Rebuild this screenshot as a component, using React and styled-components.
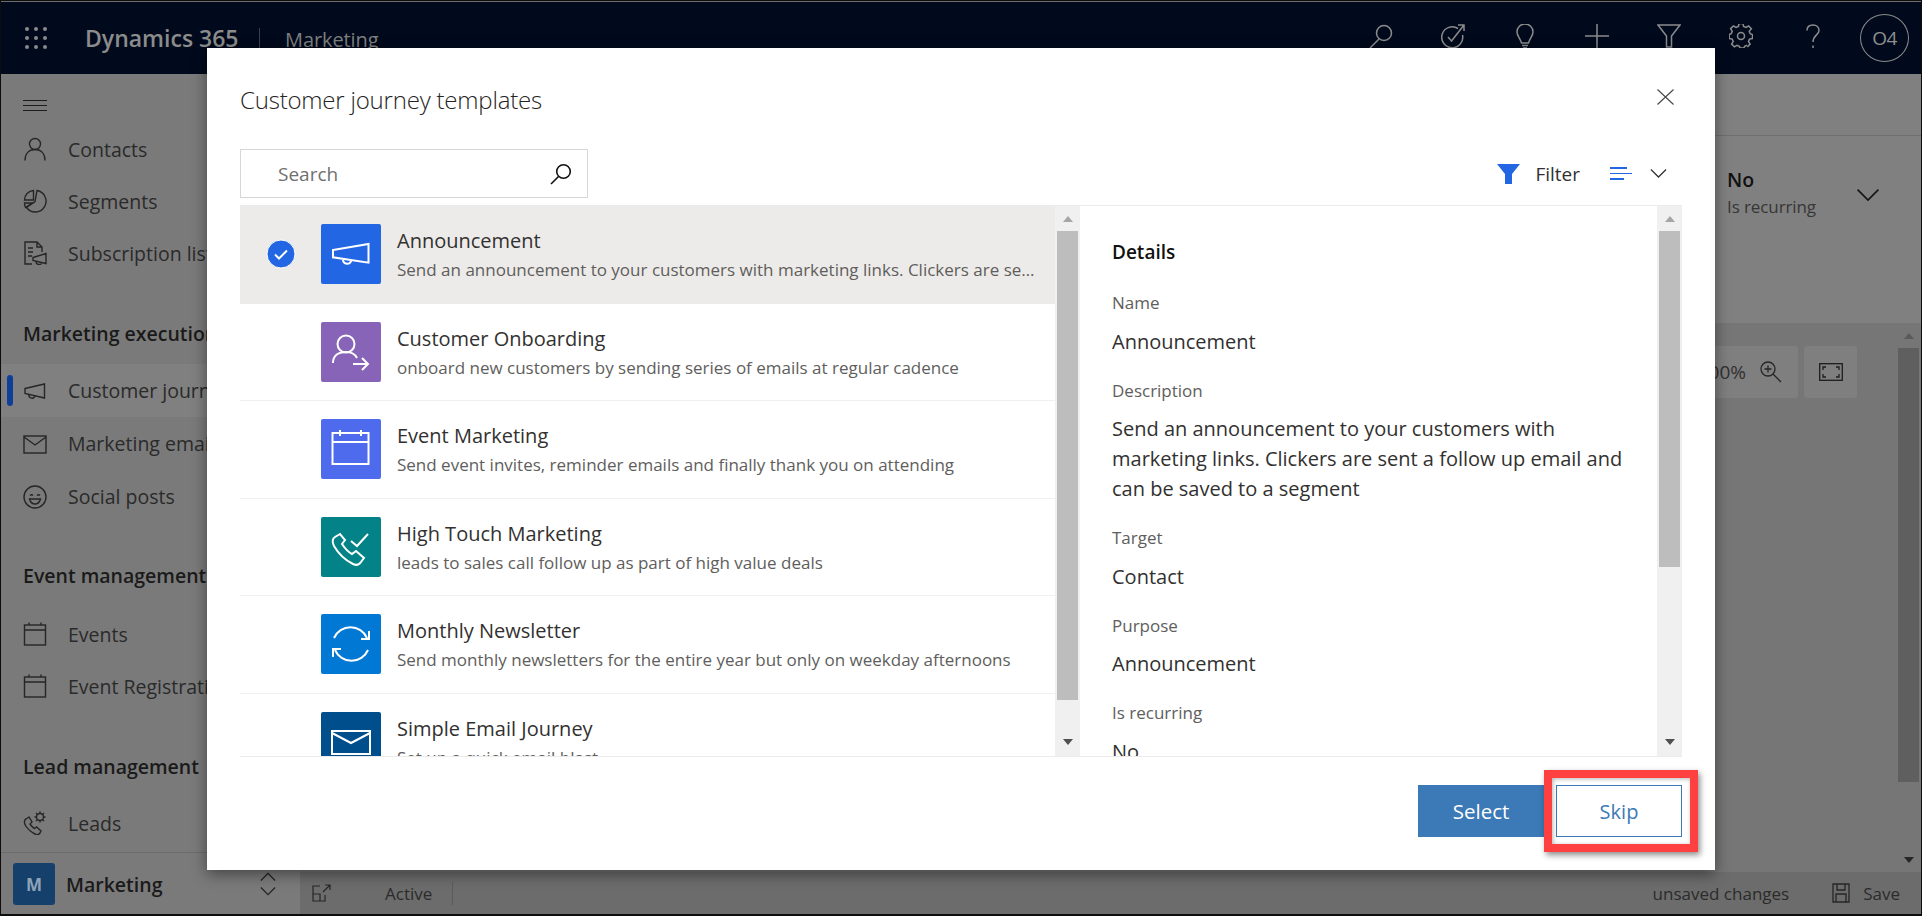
import React from "react";
import styled, { createGlobalStyle } from "styled-components";

const GlobalStyle = createGlobalStyle`
  html, body { margin: 0; padding: 0; background: #111; }
  body { font-family: "Open Sans", "Noto Sans", sans-serif; }
  * { box-sizing: border-box; }
`;

const Page = styled.div`
  position: relative;
  width: 1922px;
  height: 916px;
  overflow: hidden;
  background: #0d0d0d;
  padding: 1px 1px 2px 1px;
  display: flex;
  flex-direction: column;
`;

const TopLine = styled.div`
  height: 1px;
  background: #6e6e6e;
  flex: none;
`;

const Header = styled.header`
  flex: none;
  height: 72px;
  background: #000a1c;
  display: flex;
  align-items: center;
  color: #8c8c8c;
`;

const Waffle = styled.div`
  display: grid;
  grid-template-columns: repeat(3, 4px);
  gap: 5px;
  margin: 0 0 0 24px;
  span { width: 4px; height: 4px; border-radius: 50%; background: #8a8a8a; }
`;

const Brand = styled.div`
  margin-left: 38px;
  font-size: 23px;
  font-weight: 600;
  width: 174px;
  white-space: nowrap;
`;

const AppName = styled.div`
  border-left: 1px solid #3a3f4a;
  height: 34px;
  margin-top: 14px;
  padding-left: 25px;
  font-size: 20px;
  line-height: 24px;
  letter-spacing: -0.1px;
  color: #7f7f7f;
`;

const HeaderIcons = styled.div`
  margin-left: auto;
  display: flex;
  align-items: center;
  margin-right: 12px;
`;

const HeaderIcon = styled.div`
  width: 72px;
  display: flex;
  justify-content: center;
  margin-top: -4px;
  svg { display: block; }
`;

const Avatar = styled.div`
  width: 49px;
  height: 48px;
  margin-left: 11px;
  border: 1px solid #8a8a8a;
  border-radius: 50%;
  display: flex;
  align-items: center;
  justify-content: center;
  font-size: 19px;
  letter-spacing: -0.5px;
  color: #8f8f8f;
`;

const Shell = styled.div`
  flex: 1;
  display: flex;
  min-height: 0;
`;

const Sidebar = styled.nav`
  flex: none;
  width: 299px;
  background: #7a7a7a;
  display: flex;
  flex-direction: column;
  color: #2a2a2a;
`;

const Hamburger = styled.div`
  height: 49px;
  padding: 26px 0 0 22px;
  span { display: block; width: 24px; height: 1px; background: #1c1c1c; margin-bottom: 4px; }
`;

const NavItem = styled.div`
  position: relative;
  flex: none;
  height: ${(p) => p.$height || 52}px;
  display: flex;
  align-items: center;
  gap: 21px;
  padding-left: 22px;
  font-size: 19.5px;
  white-space: nowrap;
  background: ${(p) => (p.$active ? "#808080" : "transparent")};
  svg { flex: none; }
`;

const ActiveBar = styled.span`
  position: absolute;
  left: 6px;
  top: 11px;
  width: 6px;
  height: 31px;
  border-radius: 3px;
  background: #0f3e99;
`;

const SectionHeading = styled.div`
  flex: none;
  height: 40px;
  line-height: 40px;
  padding-left: 22px;
  margin-top: ${(p) => p.$top}px;
  margin-bottom: ${(p) => p.$bottom}px;
  font-size: 19.5px;
  font-weight: 600;
  color: #1a1a1a;
  white-space: nowrap;
`;

const AreaSwitcher = styled.div`
  margin-top: auto;
  height: 62px;
  border-top: 1px solid #6c6c6c;
  display: flex;
  align-items: center;
  padding: 1px 0 0 12px;
  font-size: 19.5px;
  font-weight: 600;
  color: #1a1a1a;
`;

const AreaTile = styled.div`
  width: 42px;
  height: 42px;
  border-radius: 3px;
  background: #15406b;
  color: #8ea3b8;
  font-size: 17px;
  font-weight: 700;
  display: flex;
  align-items: center;
  justify-content: center;
  margin-right: 11px;
`;

const AreaChevrons = styled.div`
  margin-left: auto;
  margin-right: 24px;
  display: flex;
  flex-direction: column;
  gap: 6px;
`;

const Main = styled.main`
  flex: 1;
  min-width: 0;
  display: flex;
  flex-direction: column;
`;

const CommandZone = styled.div`
  flex: none;
  height: 62px;
  background: #808080;
  border-bottom: 1px solid #6f6f6f;
`;

const SummaryZone = styled.div`
  flex: none;
  height: 187px;
  background: #808080;
  display: flex;
  justify-content: flex-end;
  align-items: flex-start;
  padding: 29px 41px 0 0;
`;

const SummaryText = styled.div`
  width: 129px;
`;

const SummaryValue = styled.div`
  font-size: 19.5px;
  line-height: 30px;
  font-weight: 600;
  color: #111;
`;

const SummaryLabel = styled.div`
  font-size: 17px;
  line-height: 23px;
  letter-spacing: -0.1px;
  color: #363636;
`;

const SummaryChevron = styled.div`
  margin-top: 24px;
  svg { display: block; }
`;

const CanvasZone = styled.div`
  flex: 1;
  background: #767676;
  display: flex;
  min-height: 0;
`;

const CanvasTools = styled.div`
  flex: 1;
  display: flex;
  justify-content: flex-end;
  align-items: flex-start;
  gap: 6px;
  padding: 23px 41px 0 0;
`;

const ToolCard = styled.div`
  width: ${(p) => p.$width}px;
  height: 52px;
  border-radius: 3px;
  background: #7f7f7f;
  display: flex;
  align-items: center;
  justify-content: ${(p) => (p.$center ? "center" : "flex-end")};
  gap: 14px;
  padding: ${(p) => (p.$center ? "0" : "0 16px 0 0")};
  font-size: 19px;
  color: #303030;
`;

const PageScroll = styled.div`
  flex: none;
  width: 21px;
  margin-right: 2px;
  display: flex;
  flex-direction: column;
  align-items: center;
`;

const PageThumb = styled.div`
  width: 21px;
  height: 434px;
  background: #5f5f5f;
`;

const Arrow = styled.span`
  display: block;
  width: 0;
  height: 0;
  border-left: 5.5px solid transparent;
  border-right: 5.5px solid transparent;
  ${(p) => (p.$down
    ? `border-top: 6px solid ${p.$color};`
    : `border-bottom: 6px solid ${p.$color};`)}
`;

const PageArrowTop = styled.div`
  height: 25px;
  padding-top: 10px;
`;

const PageArrowBottom = styled.div`
  margin-top: 75px;
`;

const StatusBar = styled.div`
  flex: none;
  height: 42px;
  background: #6c6c6c;
  display: flex;
  align-items: center;
  padding: 0 21px 0 12px;
  font-size: 17px;
  color: #2b2b2b;
`;

const StatusActive = styled.span`
  margin-left: 53px;
  padding-right: 20px;
  border-right: 1px solid #5b5b5b;
`;

const StatusUnsaved = styled.span`
  margin-left: auto;
  margin-right: 43px;
`;

const StatusSave = styled.span`
  display: flex;
  align-items: center;
  gap: 13px;
`;

const Modal = styled.section`
  position: absolute;
  left: 207px;
  top: 48px;
  width: 1508px;
  height: 822px;
  background: #fff;
  box-shadow: 0 4px 14px rgba(0, 0, 0, 0.45);
  padding: 0 33px;
  display: flex;
  flex-direction: column;
`;

const ModalHead = styled.div`
  flex: none;
  height: 101px;
  display: flex;
  justify-content: space-between;
  align-items: flex-start;
  padding-top: 33px;
`;

const ModalTitle = styled.h1`
  margin: 0;
  font-size: 24px;
  line-height: 38px;
  font-weight: 300;
  letter-spacing: -0.2px;
  color: #252423;
`;

const CloseButton = styled.div`
  margin: 8px 8px 0 0;
  svg { display: block; }
`;

const Toolbar = styled.div`
  flex: none;
  height: 49px;
  margin-bottom: 7px;
  display: flex;
  align-items: center;
  justify-content: space-between;
`;

const SearchBox = styled.div`
  width: 348px;
  height: 49px;
  border: 1px solid #d6d6d6;
  display: flex;
  align-items: center;
  justify-content: space-between;
  padding: 0 15px 0 37px;
  font-size: 19px;
  color: #6f6f6f;
`;

const ToolbarActions = styled.div`
  display: flex;
  align-items: center;
  margin-right: 15px;
  font-size: 19px;
  color: #323130;
`;

const FilterLabel = styled.span`
  margin: 0 30px 0 15px;
`;

const SortLines = styled.div`
  margin-right: 18px;
  display: flex;
  flex-direction: column;
  gap: 4px;
`;

const SortLine = styled.span`
  display: block;
  width: ${(p) => p.$width}px;
  height: 1.5px;
  background: #2266e3;
`;

const PaneRow = styled.div`
  flex: none;
  height: 552px;
  border-top: 1px solid #ebebeb;
  border-bottom: 1px solid #ebebeb;
  display: flex;
`;

const ListPane = styled.div`
  flex: none;
  width: 840px;
  display: flex;
`;

const TemplateList = styled.div`
  flex: 1;
  min-width: 0;
  overflow: hidden;
`;

const Row = styled.div`
  height: 97.6px;
  display: flex;
  align-items: flex-start;
  padding: 18px 20px 0 0;
  background: ${(p) => (p.$selected ? "#edebe9" : "transparent")};
  border-bottom: ${(p) => (p.$selected ? "none" : "1.5px solid #f0f0f0")};
`;

const CheckSlot = styled.div`
  flex: none;
  width: 81px;
  height: 60px;
  display: flex;
  align-items: center;
  justify-content: center;
`;

const Tile = styled.div`
  flex: none;
  width: 60px;
  height: 60px;
  border-radius: 2px;
  background: ${(p) => p.$color};
  margin-right: 16px;
  svg { display: block; }
`;

const RowText = styled.div`
  flex: 1;
  min-width: 0;
  padding-top: 1px;
`;

const RowTitle = styled.div`
  font-size: 20px;
  line-height: 31px;
  color: #323130;
`;

const RowDescription = styled.div`
  font-size: 17px;
  line-height: 28px;
  color: #605e5c;
  white-space: nowrap;
  overflow: hidden;
  text-overflow: ellipsis;
`;

const Scroll = styled.div`
  flex: none;
  width: 25px;
  background: #f0f0f0;
  display: flex;
  flex-direction: column;
  align-items: center;
`;

const ScrollTop = styled.div`
  height: 25px;
  padding-top: 10px;
`;

const ScrollThumb = styled.div`
  width: 21px;
  height: ${(p) => p.$height}px;
  background: #bdbdbd;
`;

const ScrollBottom = styled.div`
  margin-top: auto;
  padding-bottom: 11px;
`;

const DetailsPane = styled.div`
  flex: 1;
  min-width: 0;
  margin-left: 2px;
  display: flex;
`;

const DetailsBody = styled.div`
  flex: 1;
  min-width: 0;
  overflow: hidden;
  padding: 32px 20px 0 30px;
`;

const DetailsHeading = styled.div`
  font-size: 19px;
  line-height: 28px;
  font-weight: 600;
  color: #111;
  margin-bottom: 26px;
`;

const FieldLabel = styled.div`
  font-size: 17px;
  line-height: 22px;
  color: #605e5c;
  margin-bottom: 12.5px;
`;

const FieldValue = styled.div`
  font-size: 20px;
  line-height: 30px;
  color: #323130;
  margin-bottom: 23px;
`;

const ModalFooter = styled.div`
  flex: 1;
  display: flex;
  justify-content: flex-end;
  align-items: flex-start;
  gap: 12px;
  padding-top: 28px;
`;

const PrimaryButton = styled.div`
  width: 126px;
  height: 52px;
  background: #3b79b7;
  color: #fff;
  font-size: 20.5px;
  font-weight: 500;
  display: flex;
  align-items: center;
  justify-content: center;
`;

const SecondaryButton = styled.div`
  position: relative;
  width: 126px;
  height: 52px;
  background: #fff;
  border: 1px solid #3b79b7;
  color: #3b79b7;
  font-size: 20px;
  display: flex;
  align-items: center;
  justify-content: center;
`;

const Highlight = styled.div`
  position: absolute;
  top: -16px;
  bottom: -16px;
  left: -13px;
  right: -17px;
  border: 8px solid #ff4040;
  box-shadow: 2px 3px 6px rgba(0, 0, 0, 0.45), inset 1px 1px 4px rgba(0, 0, 0, 0.3);
`;

const dim = { fill: "none", stroke: "#262626", strokeWidth: 1.4 };
const top = { fill: "none", stroke: "#8c8c8c", strokeWidth: 1.5 };
const tile = { fill: "none", stroke: "#fff", strokeWidth: 2 };

const NavIcon = ({ children }) => (
  <svg width="24" height="24" viewBox="0 0 24 24" {...dim}>{children}</svg>
);

const TileIcon = ({ children }) => (
  <svg width="60" height="60" viewBox="0 0 60 60" {...tile}>{children}</svg>
);

const HeadIcon = ({ children, width = 24 }) => (
  <svg width={width} height="24" viewBox={`0 0 ${width} 24`} {...top}>{children}</svg>
);

const Chevron = ({ size = 17, up, color = "#323130" }) => (
  <svg width={size} height={size / 2 + 1} viewBox="0 0 18 10" fill="none" stroke={color} strokeWidth="1.3">
    <path d={up ? "M1 9.5 9 1.5l8 8" : "M1 .5l8 8 8-8"} />
  </svg>
);

const MegaphonePath = () => (
  <>
    <path d="M2 9.5 21.5 5v14L2 14.5z" />
    <path d="M6 15.5a3 3 0 0 0 6 1.2" />
  </>
);

const CalendarPath = () => (
  <>
    <rect x="1.5" y="3" width="21" height="20" />
    <path d="M1.5 8h21M6 .5V3M18 .5V3" />
  </>
);

const templates = [
  {
    name: "Announcement",
    text: "Send an announcement to your customers with marketing links. Clickers are sent a follow up email and can be saved to a segment",
    color: "#2266e3",
    selected: true,
    icon: (
      <>
        <path d="M12 26 47.5 20v18.7L12 33.3z" />
        <path d="M22 36a4.2 4.2 0 0 0 8.2.8" />
      </>
    ),
  },
  {
    name: "Customer Onboarding",
    text: "onboard new customers by sending series of emails at regular cadence",
    color: "#8764b8",
    icon: (
      <>
        <circle cx="25" cy="22" r="8.5" />
        <path d="M12 41c0-7 5-11 13-11 5 0 9 2 11 6M32 42h15M41 36l6 6-6 6" />
      </>
    ),
  },
  {
    name: "Event Marketing",
    text: "Send event invites, reminder emails and finally thank you on attending",
    color: "#4f6bed",
    icon: (
      <>
        <rect x="11.5" y="14" width="36" height="31" />
        <path d="M11.5 23h36M19 11v6M40 11v6" />
      </>
    ),
  },
  {
    name: "High Touch Marketing",
    text: "leads to sales call follow up as part of high value deals",
    color: "#038387",
    icon: (
      <>
        <path d="M19 17l-5 3c-3 2-3 5-1 9 4 7 11 14 19 18 3 1.5 6 1 8-2l3-4-8-7-4 3c-4-2-8-7-10-10l3-4z" />
        <path d="M30 24l6 5 11-12" />
      </>
    ),
  },
  {
    name: "Monthly Newsletter",
    text: "Send monthly newsletters for the entire year but only on weekday afternoons",
    color: "#0078d4",
    icon: (
      <>
        <path d="M13 24a18 18 0 0 1 33 0M48 17v8h-8" />
        <path d="M47 36a18 18 0 0 1-33 0M12 43v-8h8" />
      </>
    ),
  },
  {
    name: "Simple Email Journey",
    text: "Set up a quick email blast",
    color: "#004e8c",
    icon: (
      <>
        <rect x="11" y="19" width="38" height="23" />
        <path d="M11 21l19 10 19-10" />
      </>
    ),
  },
];

const fields = [
  ["Name", "Announcement"],
  ["Description", "Send an announcement to your customers with marketing links. Clickers are sent a follow up email and can be saved to a segment"],
  ["Target", "Contact"],
  ["Purpose", "Announcement"],
  ["Is recurring", "No"],
];

export default function App() {
  return (
    <Page>
      <GlobalStyle />
      <TopLine />
      <Header>
        <Waffle>{Array.from({ length: 9 }, (_, i) => <span key={i} />)}</Waffle>
        <Brand>Dynamics 365</Brand>
        <AppName>Marketing</AppName>
        <HeaderIcons>
          <HeaderIcon>
            <HeadIcon><circle cx="15" cy="9" r="7.5" /><path d="M10 15 1 24" /></HeadIcon>
          </HeaderIcon>
          <HeaderIcon>
            <HeadIcon>
              <path d="M17 4.5A10.5 10.5 0 1 0 21.5 11" />
              <path d="M7 13l3.5 4L23 1M17 1h6v6" />
            </HeadIcon>
          </HeaderIcon>
          <HeaderIcon>
            <HeadIcon width={18}><path d="M5.5 19C4 14 1 12 1 8a8 8 0 0 1 16 0c0 4-3 6-4.5 11zM6 21.5h6M7 24h4" /></HeadIcon>
          </HeaderIcon>
          <HeaderIcon>
            <HeadIcon><path d="M12 0v24M0 12h24" /></HeadIcon>
          </HeaderIcon>
          <HeaderIcon>
            <HeadIcon><path d="M1 1h22l-8.5 11v11h-5V12z" /></HeadIcon>
          </HeaderIcon>
          <HeaderIcon>
            <svg width="24" height="24" viewBox="0 0 24 24" {...top}>
              <circle cx="12" cy="12" r="3.5" />
              <path d="M10 1h4l.6 3 2.4 1 2.6-1.6 2.800 2.800L20.200 8.800l1 2.400 2.300.8v4l-3 .6-1 2.400 1.600 2.600-2.800 2.800" transform="translate(0 -1.5)" />
              <path d="M10 1 9.400 4 7 5 4.400 3.400 1.600 6.200l1.600 2.600-1 2.400-2 .8v4l3 .6 1 2.400-1.600 2.600 2.800 2.800 2.600-1.600 2.400 1 .6 1.800h4l.6-1.800 2.400-1" transform="translate(0 -1.5)" />
            </svg>
          </HeaderIcon>
          <HeaderIcon>
            <HeadIcon width={14}><path d="M1 6.5C1 3 3.5 1 7 1s6 2.200 6 5.500C13 11 7 11 7 18M7 21.5V24" /></HeadIcon>
          </HeaderIcon>
          <Avatar>O4</Avatar>
        </HeaderIcons>
      </Header>
      <Shell>
        <Sidebar>
          <Hamburger><span /><span /><span /></Hamburger>
          <NavItem>
            <NavIcon><circle cx="12" cy="7" r="5.5" /><path d="M2 23.5c0-7 4-11 10-11s10 4 10 11" /></NavIcon>
            Contacts
          </NavItem>
          <NavItem>
            <NavIcon>
              <path d="M14 1.5A10.800 10.800 0 1 1 3.500 18.500L12 12.500z" />
              <path d="M10.500 1.500v9.500H1.500a9.500 9.500 0 0 1 9-9.500zM1.500 14h8l-7 4.500a10 10 0 0 1-1-4.500z" />
            </NavIcon>
            Segments
          </NavItem>
          <NavItem>
            <NavIcon>
              <path d="M9 23H2V1h12l5 5v5M14 1v5h5" />
              <path d="M5 7h5M5 11h5M5 15h4M10 16.5l13-4v10l-13-3zM13 20a3 3 0 0 0 6 1" />
            </NavIcon>
            Subscription lists
          </NavItem>
          <SectionHeading $top={35} $bottom={10}>Marketing execution</SectionHeading>
          <NavItem $active $height={53}>
            <ActiveBar />
            <NavIcon><MegaphonePath /></NavIcon>
            Customer journeys
          </NavItem>
          <NavItem $height={53}>
            <NavIcon><rect x="1" y="4" width="22" height="17" /><path d="M1 5l11 8 11-8" /></NavIcon>
            Marketing emails
          </NavItem>
          <NavItem $height={53}>
            <NavIcon>
              <circle cx="12" cy="12" r="11" />
              <path d="M7 10.5c1-1 2-1 3 0M14 10.5c1-1 2-1 3 0M6.500 14h11c-1 3.500-3.500 5-5.500 5s-4.500-1.500-5.500-5z" />
            </NavIcon>
            Social posts
          </NavItem>
          <SectionHeading $top={33} $bottom={12}>Event management</SectionHeading>
          <NavItem><NavIcon><CalendarPath /></NavIcon>Events</NavItem>
          <NavItem><NavIcon><CalendarPath /></NavIcon>Event Registrations</NavItem>
          <SectionHeading $top={35} $bottom={10}>Lead management</SectionHeading>
          <NavItem>
            <NavIcon>
              <path d="M6 6 3 8c-2 1-2 4-.5 6.500C5 18.500 8 21 12 23c2 1 4 .5 5-1l1-2-4.500-4-2 1.500C9.500 16.500 8 14.500 7 13l2-2z" />
              <circle cx="17" cy="6" r="3.5" />
              <path d="M17 .5v2M17 9.500v2M11.500 6h2M20.500 6h2M13 2l1.500 1.500M19.500 8.500 21 10M13 10l1.500-1.500M19.500 3.500 21 2" />
            </NavIcon>
            Leads
          </NavItem>
          <AreaSwitcher>
            <AreaTile>M</AreaTile>
            Marketing
            <AreaChevrons>
              <Chevron size={16} up color="#222" />
              <Chevron size={16} color="#222" />
            </AreaChevrons>
          </AreaSwitcher>
        </Sidebar>
        <Main>
          <CommandZone />
          <SummaryZone>
            <SummaryText>
              <SummaryValue>No</SummaryValue>
              <SummaryLabel>Is recurring</SummaryLabel>
            </SummaryText>
            <SummaryChevron><Chevron size={24} color="#161616" /></SummaryChevron>
          </SummaryZone>
          <CanvasZone>
            <CanvasTools>
              <ToolCard $width={120}>
                100%
                <svg width="22" height="22" viewBox="0 0 22 22" fill="none" stroke="#262626" strokeWidth="1.3">
                  <circle cx="8" cy="8" r="7" />
                  <path d="M8 4.5v7M4.5 8h7M13 13l8 8" />
                </svg>
              </ToolCard>
              <ToolCard $width={53} $center>
                <svg width="24" height="18" viewBox="0 0 24 18" fill="none" stroke="#1e1e1e" strokeWidth="1.3">
                  <rect x=".7" y=".7" width="22.6" height="16.6" />
                  <path d="M7 4H4v3M17 4h3v3M7 14H4v-3M17 14h3v-3" />
                </svg>
              </ToolCard>
            </CanvasTools>
            <PageScroll>
              <PageArrowTop><Arrow $color="#5a5a5a" /></PageArrowTop>
              <PageThumb />
              <PageArrowBottom><Arrow $down $color="#262626" /></PageArrowBottom>
            </PageScroll>
          </CanvasZone>
          <StatusBar>
            <svg width="20" height="18" viewBox="0 0 20 18" fill="none" stroke="#262626" strokeWidth="1.2">
              <path d="M8 2H1v15h12v-6M1 10h7v7M11 8l7-7M13 1h5v5" />
            </svg>
            <StatusActive>Active</StatusActive>
            <StatusUnsaved>unsaved changes</StatusUnsaved>
            <StatusSave>
              <svg width="18" height="20" viewBox="0 0 18 20" fill="none" stroke="#262626" strokeWidth="1.3">
                <path d="M1 1h16v18H1zM5 1v6h8V1M4 19v-8h10v8" />
              </svg>
              Save
            </StatusSave>
          </StatusBar>
        </Main>
      </Shell>

      <Modal>
        <ModalHead>
          <ModalTitle>Customer journey templates</ModalTitle>
          <CloseButton>
            <svg width="17" height="16" viewBox="0 0 17 16" fill="none" stroke="#484644" strokeWidth="1.1">
              <path d="M.5.5l16 15M16.5.5l-16 15" />
            </svg>
          </CloseButton>
        </ModalHead>
        <Toolbar>
          <SearchBox>
            Search
            <svg width="22" height="22" viewBox="0 0 22 22" fill="none" stroke="#111" strokeWidth="1.6">
              <circle cx="13.5" cy="8.5" r="6.8" />
              <path d="M8.5 13.5 1 21" />
            </svg>
          </SearchBox>
          <ToolbarActions>
            <svg width="23" height="20" viewBox="0 0 23 20" fill="#2266e3"><path d="M0 0h23l-8 10v10H8V10z" /></svg>
            <FilterLabel>Filter</FilterLabel>
            <SortLines>
              <SortLine $width={17} />
              <SortLine $width={22} />
              <SortLine $width={14} />
            </SortLines>
            <Chevron />
          </ToolbarActions>
        </Toolbar>
        <PaneRow>
          <ListPane>
            <TemplateList>
              {templates.map((t) => (
                <Row key={t.name} $selected={t.selected}>
                  <CheckSlot>
                    {t.selected && (
                      <svg width="30" height="30" viewBox="0 0 30 30">
                        <circle cx="15" cy="15" r="14" fill="#2266e3" stroke="#fff" strokeWidth="1" />
                        <path d="M9 15.5l4 4 8-8" fill="none" stroke="#fff" strokeWidth="2" />
                      </svg>
                    )}
                  </CheckSlot>
                  <Tile $color={t.color}><TileIcon>{t.icon}</TileIcon></Tile>
                  <RowText>
                    <RowTitle>{t.name}</RowTitle>
                    <RowDescription>{t.text}</RowDescription>
                  </RowText>
                </Row>
              ))}
            </TemplateList>
            <Scroll>
              <ScrollTop><Arrow $color="#a6a6a6" /></ScrollTop>
              <ScrollThumb $height={469} />
              <ScrollBottom><Arrow $down $color="#505050" /></ScrollBottom>
            </Scroll>
          </ListPane>
          <DetailsPane>
            <DetailsBody>
              <DetailsHeading>Details</DetailsHeading>
              {fields.map(([label, value]) => (
                <React.Fragment key={label}>
                  <FieldLabel>{label}</FieldLabel>
                  <FieldValue>{value}</FieldValue>
                </React.Fragment>
              ))}
            </DetailsBody>
            <Scroll>
              <ScrollTop><Arrow $color="#a6a6a6" /></ScrollTop>
              <ScrollThumb $height={336} />
              <ScrollBottom><Arrow $down $color="#505050" /></ScrollBottom>
            </Scroll>
          </DetailsPane>
        </PaneRow>
        <ModalFooter>
          <PrimaryButton>Select</PrimaryButton>
          <SecondaryButton>
            Skip
            <Highlight />
          </SecondaryButton>
        </ModalFooter>
      </Modal>
    </Page>
  );
}
